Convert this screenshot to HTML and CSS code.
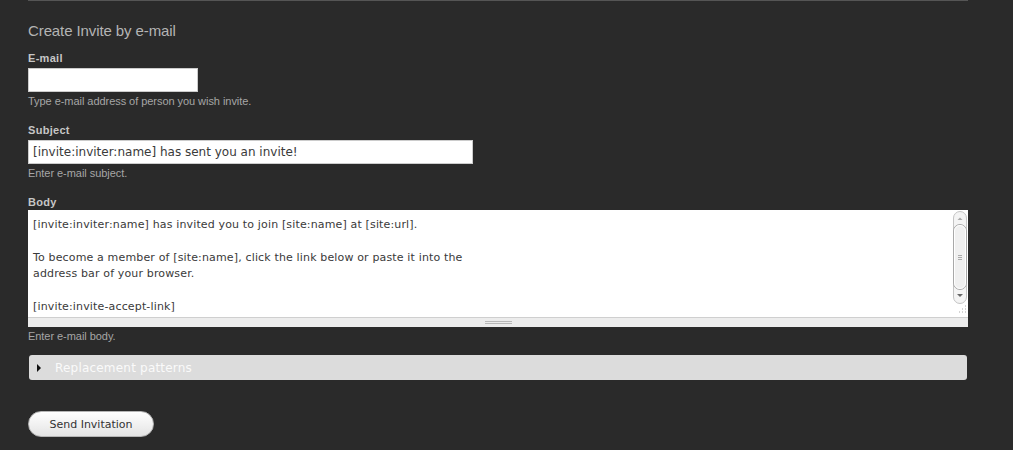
FILE: index.html
```html
<!DOCTYPE html>
<html>
<head>
<meta charset="utf-8">
<link rel="stylesheet" href="styles.css">
</head>
<body>
<div class="page">
  <form class="invite-form">
    <h2 class="title">Create Invite by e-mail</h2>

    <div class="field">
      <label class="label">E-mail</label>
      <input class="text-input email" type="text">
      <div class="desc">Type e-mail address of person you wish invite.</div>
    </div>

    <div class="field">
      <label class="label">Subject</label>
      <input class="text-input subject" type="text" value="[invite:inviter:name] has sent you an invite!">
      <div class="desc">Enter e-mail subject.</div>
    </div>

    <div class="field">
      <label class="label label-tight">Body</label>
      <div class="textarea-wrap">
        <div class="textarea-row">
          <textarea class="body-text">[invite:inviter:name] has invited you to join [site:name] at [site:url].

To become a member of [site:name], click the link below or paste it into the
address bar of your browser.

[invite:invite-accept-link]</textarea>
          <div class="scrollbar">
            <svg width="16" height="106" viewBox="0 0 16 106">
              <rect x="1.5" y="0.5" width="13" height="92" rx="6.5" fill="#f4f4f4" stroke="#c4c4c4"/>
              <path d="M5.5 9 L8 6.5 L10.5 9 Z" fill="#aaa"/>
              <rect x="1.5" y="13.5" width="13" height="65" rx="6.5" fill="#f0f0f0" stroke="#a9a9a9"/>
              <rect x="2.5" y="14.5" width="11" height="63" rx="5.5" fill="none" stroke="#fff"/>
              <path d="M6 44.5 H10 M6 46.5 H10 M6 48.5 H10" stroke="#999" stroke-width="0.8"/>
              <path d="M5 83 H11 L8 86 Z" fill="#666"/>
              <path d="M13 95 h1 M13 98 h1 M10 98 h1 M13 101 h1 M10 101 h1 M7 101 h1" stroke="#aaa" stroke-width="1.2"/>
            </svg>
          </div>
        </div>
        <div class="grippie"><span class="grip"></span></div>
      </div>
      <div class="desc">Enter e-mail body.</div>
    </div>

    <div class="fieldset">
      <span class="arrow"></span>
      <span class="legend">Replacement patterns</span>
    </div>

    <button class="send-btn" type="button">Send Invitation</button>
  </form>
</div>
</body>
</html>
```
FILE: styles.css
```css
html, body {
  margin: 0;
  padding: 0;
  background: #2a2a2a;
}

.page {
  width: 940px;
  margin-left: 28px;
  border-top: 1px solid #555;
  font-family: "Liberation Sans", Arial, sans-serif;
}

.invite-form {
  display: flex;
  flex-direction: column;
}

.title {
  margin: 20px 0 0 0;
  font-size: 15px;
  font-weight: normal;
  line-height: 20px;
  color: #b4b4b4;
  letter-spacing: -0.1px;
}

.field {
  display: flex;
  flex-direction: column;
  align-items: flex-start;
}

.title + .field {
  margin-top: 10px;
}

.field + .field {
  margin-top: 15px;
}

.label {
  font-size: 11px;
  font-weight: bold;
  line-height: 14px;
  color: #c6c6c6;
  margin-bottom: 3px;
  letter-spacing: 0.3px;
}

.label-tight {
  margin-bottom: 1px;
}

.text-input {
  box-sizing: border-box;
  height: 24px;
  border: 1px solid #ccc;
  background: #fff;
  padding: 0 4px;
  margin: 0;
  font-family: "DejaVu Sans", Verdana, sans-serif;
  font-size: 11px;
  color: #333;
  outline: none;
}

.email { width: 170px; }
.subject { width: 445px; font-size: 12px; color: #3a3a3a; }

.desc {
  font-size: 11px;
  line-height: 14px;
  color: #a6a6a6;
  margin-top: 2px;
  letter-spacing: -0.05px;
}

.textarea-wrap {
  width: 940px;
  display: flex;
  flex-direction: column;
}

.textarea-row {
  display: flex;
  background: #fff;
  height: 107px;
}

.body-text {
  flex: 1;
  box-sizing: border-box;
  height: 107px;
  margin: 0;
  border: none;
  padding: 7px 5px 0 5px;
  resize: none;
  overflow: hidden;
  font-family: "DejaVu Sans", Verdana, sans-serif;
  font-size: 11px;
  line-height: 16.4px;
  letter-spacing: 0.15px;
  color: #3a3a3a;
  outline: none;
}

.scrollbar {
  width: 16px;
  padding-top: 1px;
  background: #fff;
}

.scrollbar svg {
  display: block;
}

.grippie {
  height: 9px;
  background: #ececec;
  border-top: 1px solid #cfcfcf;
  display: flex;
  justify-content: center;
  align-items: center;
}

.grip {
  width: 27px;
  height: 1px;
  border-top: 1px solid #b8b8b8;
  border-bottom: 1px solid #b8b8b8;
}

.fieldset {
  margin: 12px 1px 0 1px;
  height: 25px;
  background: #dcdcdc;
  border-radius: 3px;
  display: flex;
  align-items: center;
  padding-left: 8px;
}

.arrow {
  width: 0;
  height: 0;
  border-top: 4px solid transparent;
  border-bottom: 4px solid transparent;
  border-left: 4px solid #111;
  margin-right: 14px;
}

.legend {
  font-family: "DejaVu Sans", Verdana, sans-serif;
  font-size: 12px;
  letter-spacing: 0.2px;
  color: #fafafa;
}

.send-btn {
  align-self: flex-start;
  margin-top: 31px;
  width: 126px;
  height: 26px;
  border: 1px solid #b5b5b5;
  border-radius: 13px;
  background: linear-gradient(#ffffff, #e4e4e4);
  font-family: "DejaVu Sans", Verdana, sans-serif;
  font-size: 11px;
  color: #333;
  padding: 0;
}
```
